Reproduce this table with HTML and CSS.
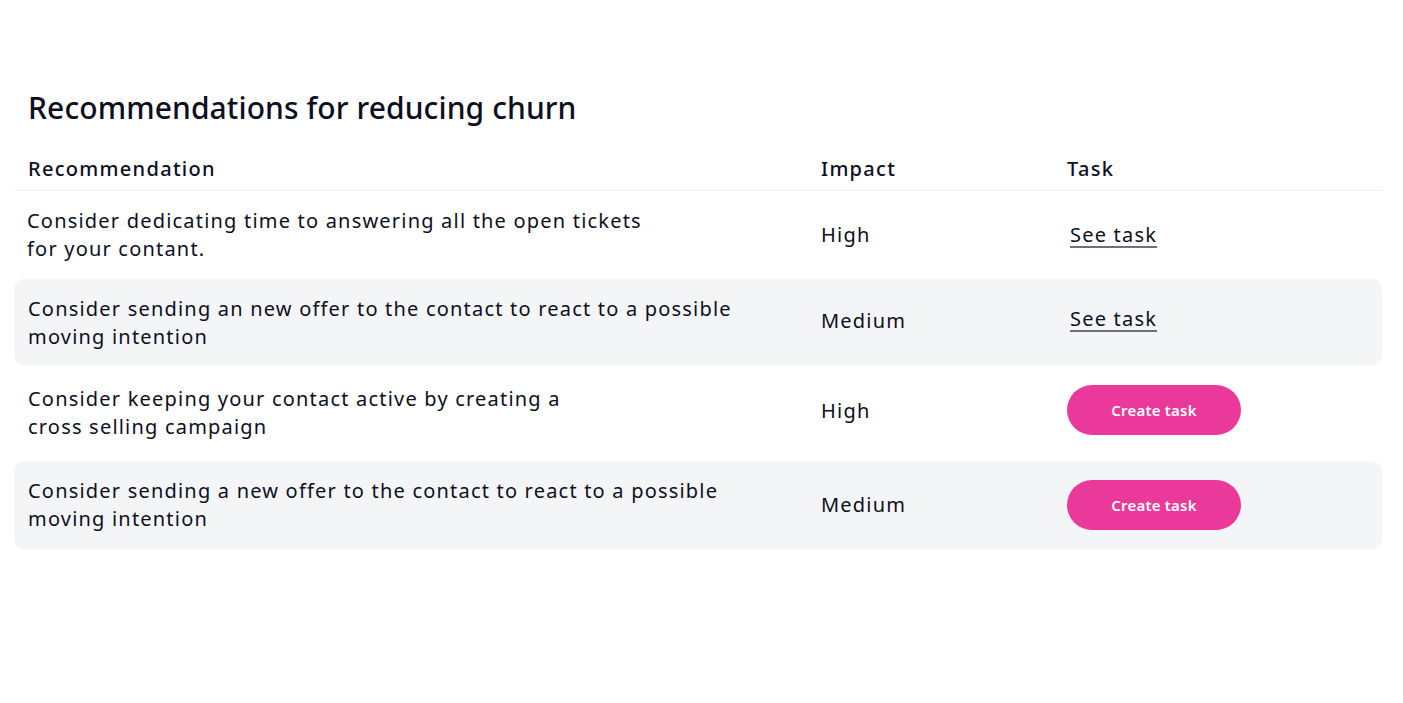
FILE: index.html
```html
<!DOCTYPE html>
<html lang="en">
<head>
<meta charset="utf-8">
<title>Recommendations for reducing churn</title>
<link rel="stylesheet" href="styles.css">
</head>
<body>
<main class="page">
  <h1 class="title">Recommendations for reducing churn</h1>
  <div class="table">
    <div class="row head">
      <div class="cell">Recommendation</div>
      <div class="cell">Impact</div>
      <div class="cell">Task</div>
    </div>
    <div class="row">
      <div class="cell rec shift-l">Consider dedicating time to answering all the open tickets<br>for your contant.</div>
      <div class="cell impact">High</div>
      <div class="cell task"><a class="link" href="#">See task</a></div>
    </div>
    <div class="row alt short">
      <div class="cell rec">Consider sending an new offer to the contact to react to a possible<br>moving intention</div>
      <div class="cell impact up2">Medium</div>
      <div class="cell task up"><a class="link" href="#">See task</a></div>
    </div>
    <div class="row tall">
      <div class="cell rec">Consider keeping your contact active by creating a<br>cross selling campaign</div>
      <div class="cell impact up2">High</div>
      <div class="cell task"><button class="btn btn-up" type="button">Create task</button></div>
    </div>
    <div class="row alt">
      <div class="cell rec">Consider sending a new offer to the contact to react to a possible<br>moving intention</div>
      <div class="cell impact">Medium</div>
      <div class="cell task"><button class="btn" type="button">Create task</button></div>
    </div>
  </div>
</main>
</body>
</html>
```

FILE: styles.css
```css
* { box-sizing: border-box; }
html, body { margin: 0; padding: 0; background: #ffffff; }
body {
  font-family: "Noto Sans", "Open Sans", sans-serif;
  color: #0d0f1f;
}
.page {
  padding: 88px 21px 0 14px;
}
.title {
  margin: 0 0 25px 14px;
  font-size: 30px;
  line-height: 40px;
  font-weight: 500;
  letter-spacing: 0.1px;
}
.table {
  display: flex;
  flex-direction: column;
}
.row {
  display: grid;
  grid-template-columns: 793px 246px 1fr;
  align-items: center;
  padding: 16px 14px;
  font-size: 20px;
  line-height: 28px;
  letter-spacing: 1.2px;
  border-radius: 10px;
}
.row.head {
  padding: 2px 14px 7px;
  border-bottom: 1px solid #eef0f2;
  border-radius: 0;
  font-weight: 500;
  letter-spacing: 1.3px;
}
.row.alt { background: #f4f5f7; }
.row.short { padding-bottom: 14px; }
.row.tall { padding-top: 20px; padding-bottom: 20px; }
.shift-l { margin-left: -1px; }
.up2 { margin-top: -4px; }
.task { padding-left: 3px; }
.task.up { margin-top: -8px; }
.link {
  color: #0d0f1f;
  text-decoration: underline;
  text-decoration-thickness: 2px;
  text-underline-offset: 4px;
  text-decoration-color: #6d6f80;
}
.btn {
  margin-left: -3px;
  width: 174px;
  height: 50px;
  border: none;
  border-radius: 25px;
  background: #ea399b;
  color: #ffffff;
  font-family: "Noto Sans", "Open Sans", sans-serif;
  font-size: 15px;
  font-weight: 600;
  letter-spacing: 0.2px;
  cursor: pointer;
}
.btn-up { margin-top: -6px; }
```
